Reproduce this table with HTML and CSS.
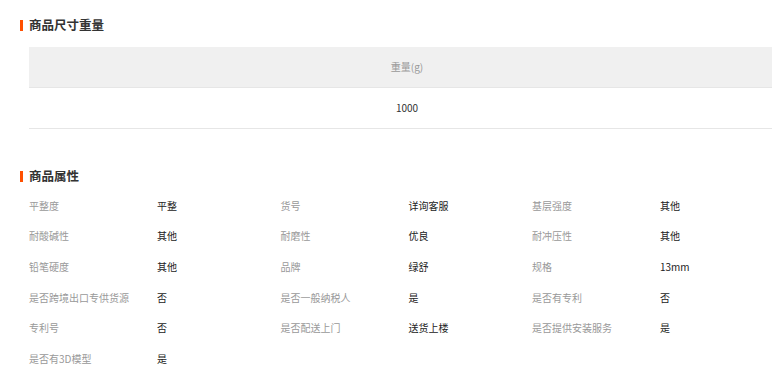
FILE: index.html
```html
<!DOCTYPE html>
<html lang="zh-CN">
<head>
<meta charset="utf-8">
<link rel="stylesheet" href="styles.css">
</head>
<body>
<div class="page">
  <section class="section">
    <h2 class="title">商品尺寸重量</h2>
    <div class="size-table">
      <div class="size-head">重量(g)</div>
      <div class="size-row">1000</div>
    </div>
  </section>
  <section class="section attrs-section">
    <h2 class="title">商品属性</h2>
    <div class="attrs">
      <div class="pair"><span class="k">平整度</span><span class="v">平整</span></div>
      <div class="pair"><span class="k">货号</span><span class="v">详询客服</span></div>
      <div class="pair"><span class="k">基层强度</span><span class="v">其他</span></div>
      <div class="pair"><span class="k">耐酸碱性</span><span class="v">其他</span></div>
      <div class="pair"><span class="k">耐磨性</span><span class="v">优良</span></div>
      <div class="pair"><span class="k">耐冲压性</span><span class="v">其他</span></div>
      <div class="pair"><span class="k">铅笔硬度</span><span class="v">其他</span></div>
      <div class="pair"><span class="k">品牌</span><span class="v">绿舒</span></div>
      <div class="pair"><span class="k">规格</span><span class="v">13mm</span></div>
      <div class="pair"><span class="k">是否跨境出口专供货源</span><span class="v">否</span></div>
      <div class="pair"><span class="k">是否一般纳税人</span><span class="v">是</span></div>
      <div class="pair"><span class="k">是否有专利</span><span class="v">否</span></div>
      <div class="pair"><span class="k">专利号</span><span class="v">否</span></div>
      <div class="pair"><span class="k">是否配送上门</span><span class="v">送货上楼</span></div>
      <div class="pair"><span class="k">是否提供安装服务</span><span class="v">是</span></div>
      <div class="pair"><span class="k">是否有3D模型</span><span class="v">是</span></div>
    </div>
  </section>
</div>
</body>
</html>
```

FILE: styles.css
```css
html, body {
  margin: 0;
  padding: 0;
  background: #fff;
  overflow: hidden;
}
body {
  font-family: "Noto Sans CJK SC", "Noto Sans", sans-serif;
  color: #333;
}
.page {
  width: 785px;
  padding-top: 17px;
}
.section {
  padding-left: 20px;
}
.title {
  margin: 0;
  font-size: 12.5px;
  font-weight: bold;
  line-height: 16px;
  height: 16px;
  color: #333;
  display: flex;
  align-items: center;
  gap: 6px;
}
.title::before {
  content: "";
  width: 3px;
  height: 11px;
  background: #ff5000;
  flex: none;
}
.size-table {
  margin: 14px 0 0 9px;
  font-size: 10px;
}
.size-head {
  height: 40px;
  line-height: 40px;
  background: #f0f0f0;
  border-bottom: 1px solid #e6e6e6;
  text-align: center;
  color: #999;
}
.size-row {
  height: 40px;
  line-height: 40px;
  border-bottom: 1px solid #e6e6e6;
  text-align: center;
  color: #333;
}
.attrs-section {
  margin-top: 39px;
}
.attrs {
  margin: 6px 0 0 9px;
  display: grid;
  grid-template-columns: repeat(3, 251.5px);
  grid-auto-rows: 30.6px;
  font-size: 10px;
}
.pair {
  display: flex;
  align-items: center;
}
.k {
  width: 128px;
  flex: none;
  color: #999;
}
.v {
  color: #222;
}
```
